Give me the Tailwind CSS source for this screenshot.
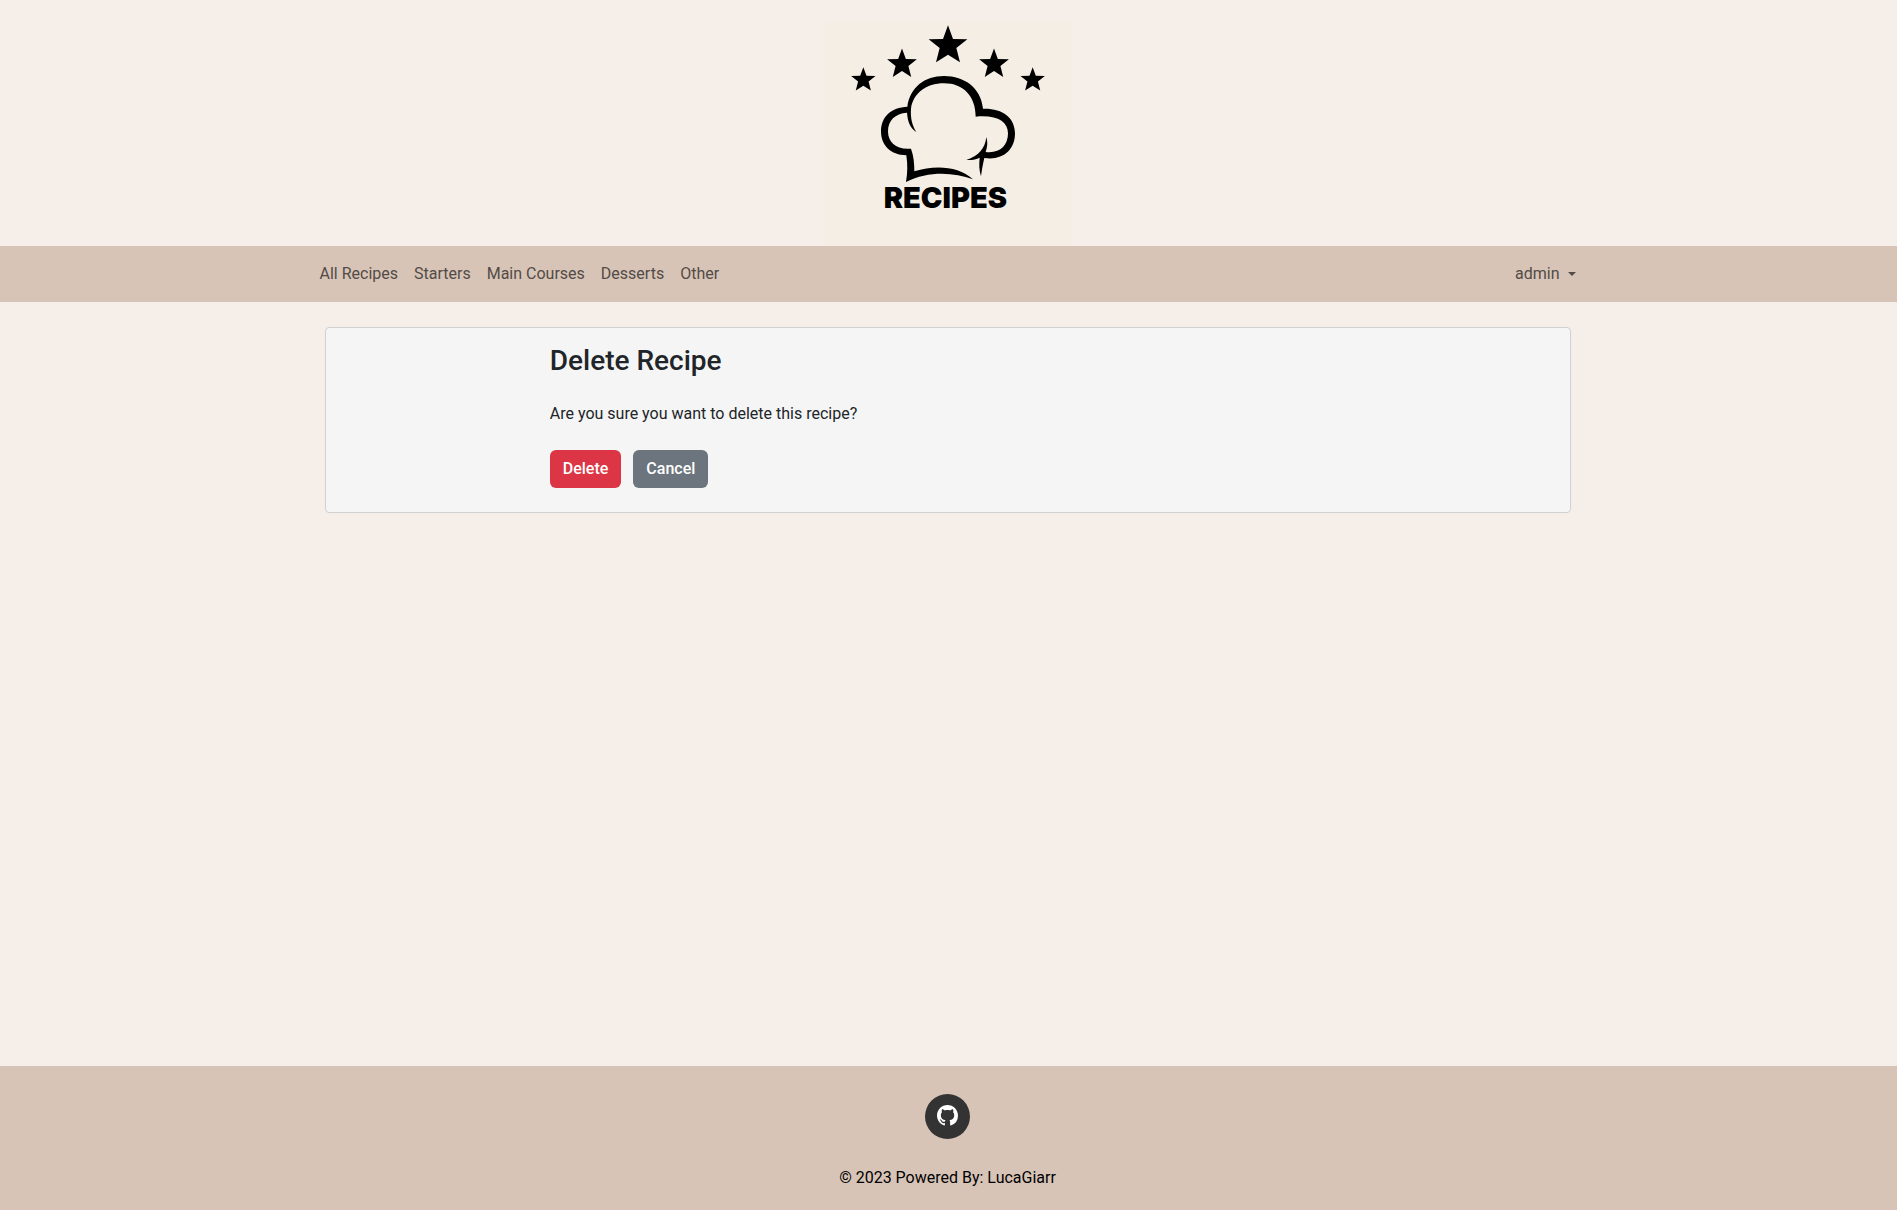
<!DOCTYPE html>
<html lang="en">
<head>
<meta charset="utf-8">
<meta name="viewport" content="width=device-width, initial-scale=1">
<title>Delete Recipe</title>
<script src="https://cdn.jsdelivr.net/npm/@tailwindcss/browser@4"></script>
</head>
<body class="flex min-h-screen flex-col bg-[#f6eee8] font-['Roboto',sans-serif] text-base text-[#212529]">
  <header class="flex justify-center pt-[22px] pr-0.5">
    <a href="#" aria-label="Recipes home" class="block bg-[#f5eee5]">
      <svg class="block h-56 w-[250px]" viewBox="69 66 750 672" role="img" aria-label="Recipes">
        <defs>
          <path id="star" d="M0-58 15-17 58-16 25 10 36 53 0 30-36 53-25 10-58-16-15-17Z"/>
        </defs>
        <use href="#star" transform="translate(444 134)"/>
        <use href="#star" transform="translate(306 190) scale(.77)"/>
        <use href="#star" transform="translate(582 190) scale(.77)"/>
        <use href="#star" transform="translate(190 238) scale(.63)"/>
        <use href="#star" transform="translate(698 238) scale(.63)"/>
        <path d="M322 320C330 262 374 228 432 228C494 228 543 264 549 326C606 324 645 352 645 400C645 451 608 482 553 474C549 490 546 508 543 529C537 510 537 492 539 473C528 479 515 481 499 480C536 468 555 446 559 411C564 427 562 441 557 456C599 461 624 437 624 400C624 364 590 344 527 350C527 290 491 250 432 250C378 250 339 281 333 326C331 353 336 375 349 396C331 384 323 366 321 338C285 340 264 362 264 394C264 430 291 450 333 446C341 468 343 490 343 514C405 494 476 498 519 538C460 516 385 512 318 546C323 518 323 493 319 466C272 465 243 437 243 394C243 350 274 322 322 320Z"/>
        <text x="436" y="625" text-anchor="middle" class="font-['Inter',sans-serif] text-[87px] font-black">RECIPES</text>
      </svg>
    </a>
  </header>

  <nav class="bg-[#d7c4b7] pr-0.5 text-[#534b46]">
    <div class="mx-auto flex h-14 max-w-[1320px] items-center justify-between px-8">
      <ul class="flex gap-4">
        <li><a href="#">All Recipes</a></li>
        <li><a href="#">Starters</a></li>
        <li><a href="#">Main Courses</a></li>
        <li><a href="#">Desserts</a></li>
        <li><a href="#">Other</a></li>
      </ul>
      <button type="button" aria-haspopup="true" class="flex items-center gap-2">
        admin
        <span class="border-x-4 border-t-4 border-x-transparent border-t-[#534b46]"></span>
      </button>
    </div>
  </nav>

  <main class="w-full grow pt-[25px] pr-0.5">
    <div class="mx-auto max-w-[1318px] px-9">
      <section class="rounded border border-[#cfd1d3] bg-[#f5f5f5] pt-4 pr-6 pb-6 pl-[18%]">
        <h1 class="text-[28px] leading-[34px] font-medium">Delete Recipe</h1>
        <p class="mt-6">Are you sure you want to delete this recipe?</p>
        <form class="mt-6 flex gap-3">
          <button type="submit" class="rounded-md bg-[#dc3545] px-[13px] py-[7px] font-medium text-white">Delete</button>
          <button type="button" class="rounded-md bg-[#6c757d] px-[13px] py-[7px] font-medium text-white">Cancel</button>
        </form>
      </section>
    </div>
  </main>

  <footer class="flex flex-col items-center bg-[#d7c4b7] pt-7 pr-0.5 pb-5 text-black">
    <a href="#" aria-label="GitHub" class="flex size-[45px] justify-center rounded-full bg-[#333] pt-[11px]">
      <svg class="size-[21px] fill-white" viewBox="0 0 16 16" aria-hidden="true"><path d="M8 0C3.58 0 0 3.58 0 8c0 3.54 2.29 6.53 5.47 7.59.4.07.55-.17.55-.38 0-.19-.01-.82-.01-1.49-2.01.37-2.53-.49-2.69-.94-.09-.23-.48-.94-.82-1.13-.28-.15-.68-.52-.01-.53.63-.01 1.08.58 1.23.82.72 1.21 1.87.87 2.33.66.07-.52.28-.87.51-1.07-1.78-.2-3.64-.89-3.64-3.95 0-.87.31-1.59.82-2.15-.08-.2-.36-1.02.08-2.12 0 0 .67-.21 2.2.82.64-.18 1.32-.27 2-.27s1.36.09 2 .27c1.53-1.04 2.2-.82 2.2-.82.44 1.1.16 1.92.08 2.12.51.56.82 1.27.82 2.15 0 3.07-1.87 3.75-3.65 3.95.29.25.54.73.54 1.48 0 1.07-.01 1.93-.01 2.2 0 .21.15.46.55.38A8.01 8.01 0 0 0 16 8c0-4.42-3.58-8-8-8"/></svg>
    </a>
    <p class="mt-[27px]">© 2023 Powered By: LucaGiarr</p>
  </footer>
</body>
</html>
